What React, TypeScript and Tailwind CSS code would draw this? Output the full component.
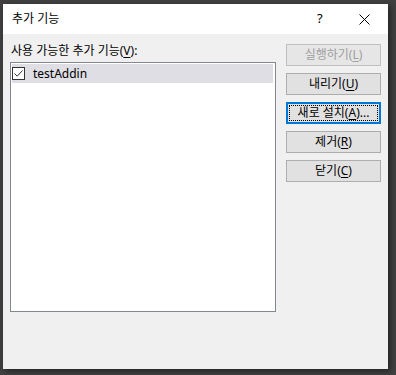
import React from "react";

const font = { fontFamily: '"Noto Sans", "Noto Sans CJK KR", sans-serif' };

function Mn({ k }: { k: string }) {
  return <span className="underline underline-offset-2">{k}</span>;
}

function DlgButton({
  children,
  disabled,
  focused,
}: {
  children: React.ReactNode;
  disabled?: boolean;
  focused?: boolean;
}) {
  if (focused) {
    return (
      <div className="w-[95px] h-[22px] border-2 border-[#0078d7] bg-[#e1e1e1] p-[1px]">
        <div className="h-full w-full border border-dotted border-black flex items-center justify-center text-[12px] text-black leading-none">
          {children}
        </div>
      </div>
    );
  }
  return (
    <div
      className={
        disabled
          ? "w-[95px] h-[22px] border border-[#bfbfbf] bg-[#e6e6e6] flex items-center justify-center text-[12px] text-[#a0a0a0] leading-none"
          : "w-[95px] h-[22px] border border-[#adadad] bg-[#e1e1e1] flex items-center justify-center text-[12px] text-black leading-none"
      }
    >
      {children}
    </div>
  );
}

export default function App() {
  return (
    <div className="w-[396px] h-[375px] bg-[#414141] pt-[4px] pl-[3px]" style={font}>
      <div className="w-[385px] h-[365px] bg-[#f0f0f0] shadow-[2px_2px_6px_rgba(0,0,0,0.5)] flex flex-col">
        {/* title bar */}
        <div className="h-[30px] bg-white flex items-center pl-[9px] text-[12px] text-black">
          <span className="flex-1">추가 기능</span>
          <span className="w-[10px] text-[13px] mr-[32px]">?</span>
          <svg width="11" height="11" viewBox="0 0 11 11" className="mr-[18px]">
            <path d="M0.5 0.5 L10.5 10.5 M10.5 0.5 L0.5 10.5" stroke="#000" strokeWidth="1" />
          </svg>
        </div>

        <div className="flex pl-[7px]">
          {/* left column */}
          <div className="flex flex-col pt-[9px]">
            <div className="text-[12px] leading-[16px] text-black pl-[1px] mb-[3px]">
              사용 가능한 추가 기능(<Mn k="V" />):
            </div>
            <div className="w-[266px] h-[250px] border border-[#828790] bg-white">
              <div className="ml-[1px] mr-[2px] mt-[1px] h-[19px] bg-[#dedee4] flex items-center">
                <div className="w-[13px] h-[13px] border border-[#333] bg-white flex items-center justify-center">
                  <svg width="11" height="11" viewBox="0 0 11 11">
                    <path d="M1.5 5.5 L4.2 8.2 L9.5 2.5" stroke="#333" strokeWidth="1" fill="none" />
                  </svg>
                </div>
                <span className="ml-[8px] text-[12px] text-black leading-none">testAddin</span>
              </div>
            </div>
          </div>

          {/* right column */}
          <div className="flex flex-col gap-[7px] ml-[10px] pt-[10px]">
            <DlgButton disabled>
              실행하기(<Mn k="L" />)
            </DlgButton>
            <DlgButton>
              내리기(<Mn k="U" />)
            </DlgButton>
            <DlgButton focused>
              새로 설치(<Mn k="A" />)...
            </DlgButton>
            <DlgButton>
              제거(<Mn k="R" />)
            </DlgButton>
            <DlgButton>
              닫기(<Mn k="C" />)
            </DlgButton>
          </div>
        </div>
      </div>
    </div>
  );
}
